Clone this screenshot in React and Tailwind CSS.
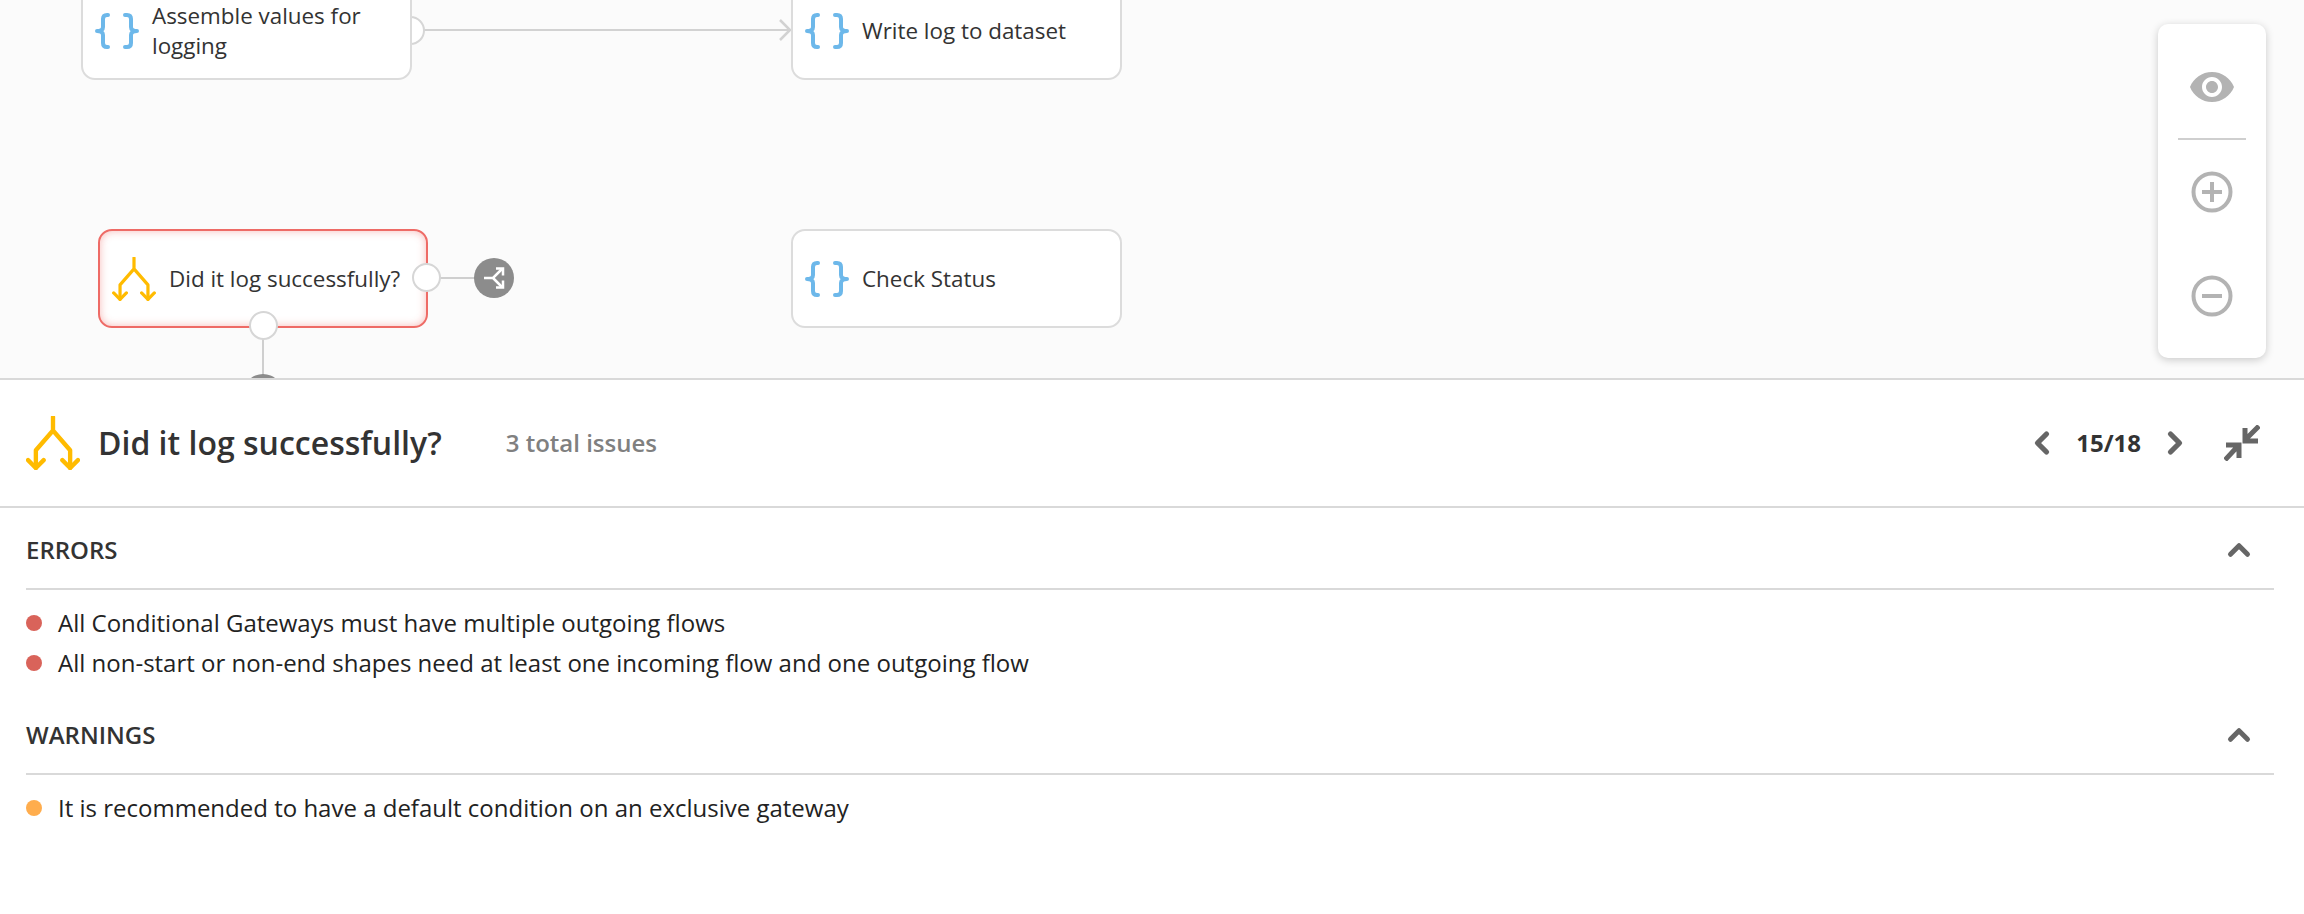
import { ChevronLeft, ChevronRight, ChevronUp } from 'lucide-react';

function BracesIcon() {
  return (
    <svg width="44" height="36" viewBox="0 0 44 36" fill="none" stroke="#6db8ea" strokeWidth="4" strokeLinecap="round" strokeLinejoin="round" className="shrink-0">
      <path d="M13 2h-1C9 2 8 3.500 8 6v8c0 2.500-2 4-6 4 4 0 6 1.500 6 4v8c0 2.500 1 4 4 4h1" />
      <path d="M30 2h2c3 0 4 1.500 4 4v8c0 2.500 2 4 6 4-4 0-6 1.500-6 4v8c0 2.500-1 4-4 4h-2" />
    </svg>
  );
}

function GatewayIcon({ size, stroke }) {
  return (
    <svg width={size} height={size} viewBox="0 0 52 52" fill="none" stroke="#ffbb00" strokeWidth={stroke} strokeLinecap="round" strokeLinejoin="round" className="shrink-0">
      <path d="M26 1v13L9.500 33v17M26 14l16.500 19v17" />
      <path d="M2 42.500l7.500 7.500 7.500-7.500M35 42.500l7.500 7.500 7.500-7.500" />
    </svg>
  );
}

function ShuffleBadge() {
  return (
    <svg width="40" height="40" viewBox="0 0 40 40" fill="none" stroke="#fff" strokeWidth="2.500" strokeLinejoin="miter">
      <path d="M10 20h9l9-9M19 20l9 9" />
      <path d="M22 10.500h7v7M22 29.500h7v-7" />
    </svg>
  );
}

function Port({ className }) {
  return <div className={`absolute w-[29px] h-[29px] rounded-full bg-white border-2 border-[#d6d6d6] ${className}`} />;
}

function TaskCard({ className, label }) {
  return (
    <div className={`absolute w-[331px] h-[99px] rounded-[14px] bg-white border-2 border-[#dcdcdc] flex items-center pl-[12px] gap-[13px] ${className}`}>
      <BracesIcon />
      <span className="text-[22.4px] leading-[30px] font-medium text-[#333]">{label}</span>
    </div>
  );
}

const errors = [
  'All Conditional Gateways must have multiple outgoing flows',
  'All non-start or non-end shapes need at least one incoming flow and one outgoing flow',
];
const warnings = ['It is recommended to have a default condition on an exclusive gateway'];

function Section({ title, items, dotClass, className }) {
  return (
    <section className={className}>
      <div className="h-[67px] pb-[11px] flex items-center justify-between border-b-2 border-[#d9d9d9]">
        <h2 className="text-[24px] leading-[30px] font-semibold text-[#333]">{title}</h2>
        <ChevronUp size={34} strokeWidth={3.500} color="#666" className="mr-[18px]" />
      </div>
      <ul className="pt-[13px] flex flex-col">
        {items.map(text => (
          <li key={text} className="h-[40px] flex items-center gap-[16px] text-[24px] text-[#222]">
            <span className={`w-[16px] h-[16px] rounded-full ${dotClass}`} />
            {text}
          </li>
        ))}
      </ul>
    </section>
  );
}

export default function App() {
  return (
    <div className="w-full h-[914px] bg-white flex flex-col overflow-hidden font-['Open_Sans',sans-serif]">
      {/* Canvas */}
      <div className="relative h-[380px] shrink-0 overflow-hidden bg-[#fbfbfb] border-b-2 border-[#d9d9d9]">
        <div className="absolute left-[424px] top-[29px] w-[366px] h-[2px] bg-[#d2d2d2]" />
        <svg className="absolute left-[776px] top-[19px]" width="16" height="22" viewBox="0 0 16 22" fill="none" stroke="#d2d2d2" strokeWidth="2.500">
          <path d="M4 1l10 10L4 21" />
        </svg>
        <div className="absolute left-[262px] top-[320px] w-[2px] h-[60px] bg-[#cfcfcf]" />
        <div className="absolute left-[440px] top-[277px] w-[40px] h-[2px] bg-[#cfcfcf]" />

        {/* port sits behind the card here */}
        <Port className="left-[396px] top-[16px]" />
        <TaskCard className="left-[81px] top-[-19px]" label="Assemble values for logging" />
        <TaskCard className="left-[791px] top-[-19px]" label="Write log to dataset" />

        <div className="absolute left-[98px] top-[229px] w-[330px] h-[99px] rounded-[14px] bg-white border-2 border-[#ee6b66] shadow-[inset_0_0_9px_rgba(238,107,102,0.45)] flex items-center pl-[12px] gap-[13px]">
          <GatewayIcon size={44} stroke={3.800} />
          <span className="text-[22.4px] leading-[30px] font-medium text-[#333] whitespace-nowrap">Did it log successfully?</span>
        </div>
        <Port className="left-[412px] top-[263px]" />
        <Port className="left-[249px] top-[311px]" />
        <div className="absolute left-[474px] top-[258px] w-[40px] h-[40px] rounded-full bg-[#8c8c8c]">
          <ShuffleBadge />
        </div>
        <div className="absolute left-[243px] top-[374px] w-[40px] h-[40px] rounded-full bg-[#8c8c8c]" />

        <TaskCard className="left-[791px] top-[229px]" label="Check Status" />

        {/* Zoom controls */}
        <div className="absolute left-[2158px] top-[24px] w-[108px] h-[334px] rounded-[10px] bg-white shadow-[0_2px_8px_rgba(0,0,0,0.2)] flex flex-col items-center">
          <svg className="mt-[39px]" width="48" height="48" viewBox="0 0 24 24" fill="#b3b3b3">
            <path d="M12 4.500C7 4.500 2.730 7.610 1 12c1.730 4.390 6 7.500 11 7.500s9.270-3.110 11-7.500c-1.730-4.390-6-7.500-11-7.500zM12 17c-2.760 0-5-2.240-5-5s2.240-5 5-5 5 2.240 5 5-2.240 5-5 5zm0-8c-1.660 0-3 1.340-3 3s1.340 3 3 3 3-1.340 3-3-1.340-3-3-3z" />
          </svg>
          <div className="w-[68px] h-[2px] bg-[#cfcfcf] mt-[27px]" />
          <svg className="mt-[31px]" width="42" height="42" viewBox="0 0 42 42" fill="none" stroke="#b3b3b3" strokeWidth="4">
            <circle cx="21" cy="21" r="18.500" />
            <path d="M11 21h20M21 11v20" />
          </svg>
          <svg className="mt-[62px]" width="42" height="42" viewBox="0 0 42 42" fill="none" stroke="#b3b3b3" strokeWidth="4">
            <circle cx="21" cy="21" r="18.500" />
            <path d="M11 21h20" />
          </svg>
        </div>
      </div>

      {/* Issue header */}
      <header className="h-[128px] shrink-0 flex items-center border-b-2 border-[#d9d9d9] pl-[26px] pr-[44px]">
        <GatewayIcon size={54} stroke={4.200} />
        <h1 className="ml-[18px] text-[32px] leading-[40px] font-semibold text-[#333] whitespace-nowrap">Did it log successfully?</h1>
        <span className="ml-[64px] text-[24px] font-semibold text-[#808080]">3 total issues</span>
        <div className="ml-auto flex items-center">
          <ChevronLeft size={36} strokeWidth={3.500} color="#666" />
          <span className="mx-[16px] text-[24px] font-bold text-[#333]">15/18</span>
          <ChevronRight size={36} strokeWidth={3.500} color="#666" />
          <svg className="ml-[31px]" width="36" height="36" viewBox="0 0 36 36" fill="none" stroke="#666" strokeWidth="5">
            <path d="M35 1L21 15M21 3v13h13" />
            <path d="M1 35l13-14M2 20h13v13" />
          </svg>
        </div>
      </header>

      {/* Issue lists */}
      <div className="pl-[26px] pr-[30px]">
        <Section title="ERRORS" items={errors} dotClass="bg-[#d9635a]" className="pt-[15px]" />
        <Section title="WARNINGS" items={warnings} dotClass="bg-[#ffad4d]" className="pt-[25px]" />
      </div>
    </div>
  );
}
